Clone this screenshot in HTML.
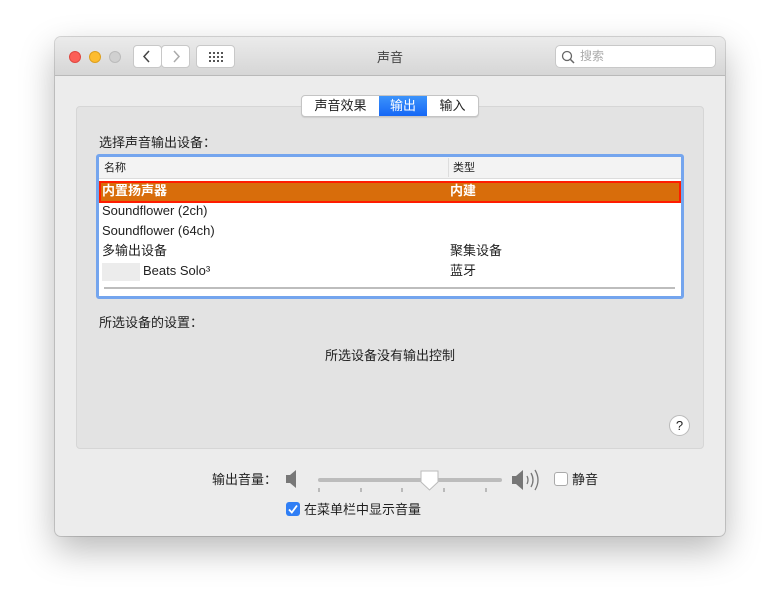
<!DOCTYPE html><html><head><meta charset="utf-8"><style>
*{box-sizing:border-box;margin:0;padding:0}
body{width:780px;height:610px;background:#fff;position:relative;font-family:"Liberation Sans","Noto Sans CJK SC",sans-serif;font-size:13px;color:#222;overflow:hidden}
.a{position:absolute}
.win{left:55px;top:37px;width:670px;height:499px;background:#ececec;border-radius:6px;box-shadow:0 14px 35px rgba(0,0,0,.28),0 0 0 1px rgba(0,0,0,.15);overflow:hidden}
.tb{left:0;top:0;width:670px;height:39px;background:linear-gradient(#ebebeb,#d6d6d6);border-bottom:1px solid #b9b9b9}
.dot{width:12px;height:12px;border-radius:50%;top:14px}
.btn{background:#fff;border:1px solid #c8c8c8;border-radius:4px;height:23px;top:8px}
.row{position:absolute;left:6px;width:577px;height:20px;line-height:20px;font-size:13px}
</style></head><body>
<div class="a win">
<div class="a tb">
<div class="a dot" style="left:14px;background:#fc5f57;border:1px solid #df4740"></div>
<div class="a dot" style="left:34px;background:#fdbc2e;border:1px solid #dd9f1e"></div>
<div class="a dot" style="left:54px;background:#d0d0d0;border:1px solid #bbb"></div>
<div class="a btn" style="left:78px;width:29px"><svg width="27" height="21"><path d="M15 5l-5 5.5 5 5.5" stroke="#444" stroke-width="1.5" fill="none"/></svg></div>
<div class="a btn" style="left:106px;width:29px"><svg width="27" height="21"><path d="M12 5l5 5.5-5 5.5" stroke="#aaa" stroke-width="1.5" fill="none"/></svg></div>
<div class="a btn" style="left:141px;width:39px"><svg width="39" height="21" style="position:absolute;left:-1px;top:0"><g fill="#555"><rect x="13" y="6" width="2" height="2"/><rect x="17" y="6" width="2" height="2"/><rect x="21" y="6" width="2" height="2"/><rect x="25" y="6" width="2" height="2"/><rect x="13" y="10" width="2" height="2"/><rect x="17" y="10" width="2" height="2"/><rect x="21" y="10" width="2" height="2"/><rect x="25" y="10" width="2" height="2"/><rect x="13" y="14" width="2" height="2"/><rect x="17" y="14" width="2" height="2"/><rect x="21" y="14" width="2" height="2"/><rect x="25" y="14" width="2" height="2"/></g></svg></div>
<div class="a" style="left:0;width:670px;top:10px;text-align:center;color:#444">声音</div>
<div class="a btn" style="left:500px;width:161px;border-radius:5px;padding-left:24px;line-height:21px;color:#aaa;font-size:12px">搜索<svg class="a" style="left:5px;top:4px" width="14" height="14"><circle cx="6" cy="6" r="4.5" stroke="#666" stroke-width="1.3" fill="none"/><path d="M9.5 9.5L13 13" stroke="#666" stroke-width="1.5"/></svg></div>
</div>
<div class="a" style="left:21px;top:69px;width:628px;height:343px;background:#e3e3e3;border:1px solid #d6d6d6;border-radius:4px"></div>
<div class="a" style="left:246px;top:58px;width:178px;height:22px;background:#fff;border:1px solid #c4c4c4;border-radius:4px;box-shadow:0 1px 1px rgba(0,0,0,.1)"></div>
<div class="a" style="left:247px;top:59px;width:77px;height:20px;line-height:19px;text-align:center">声音效果</div>
<div class="a" style="left:324px;top:59px;width:48px;height:20px;line-height:19px;text-align:center;color:#fff;background:linear-gradient(#3c93fb,#1567f5)">输出</div>
<div class="a" style="left:372px;top:59px;width:51px;height:20px;line-height:19px;text-align:center">输入</div>
<div class="a" style="left:44px;top:95px;font-size:13px">选择声音输出设备：</div>
<div class="a" style="left:41px;top:117px;width:588px;height:145px;background:#fff;border:3px solid #74a5ee;border-radius:3px">
<div class="a" style="left:0;top:0;width:582px;height:22px;background:#f3f3f3;border-bottom:1px solid #ddd;font-size:11px;line-height:20px"><span class="a" style="left:5px;top:1px">名称</span><span class="a" style="left:349px;border-left:1px solid #ddd;padding-left:4px;height:19px;top:1px;line-height:21px">类型</span></div>
<div class="a" style="left:0;top:24px;width:582px;height:22px;background:#d86d0b;border:2px solid #ff1c00"></div>
<div class="row" style="top:24px;left:3px;color:#fff;font-weight:bold">内置扬声器<span class="a" style="left:348px">内建</span></div>
<div class="row" style="top:44px;left:3px">Soundflower (2ch)</div>
<div class="row" style="top:64px;left:3px">Soundflower (64ch)</div>
<div class="row" style="top:84px;left:3px">多输出设备<span class="a" style="left:348px">聚集设备</span></div>
<div class="row" style="top:104px;left:3px"><span class="a" style="left:0;top:2px;width:38px;height:18px;background:#ececec"></span><span class="a" style="left:41px">Beats Solo³</span><span class="a" style="left:348px">蓝牙</span></div>
<div class="a" style="left:5px;top:130px;width:571px;height:2px;background:#bdbdbd"></div>
</div>
<div class="a" style="left:44px;top:275px">所选设备的设置：</div>
<div class="a" style="left:0;width:670px;top:308px;text-align:center">所选设备没有输出控制</div>
<div class="a" style="left:614px;top:378px;width:21px;height:21px;border-radius:50%;background:#fff;border:1px solid #bbb;text-align:center;line-height:19px;font-size:13px">?</div>
<div class="a" style="left:157px;top:432px">输出音量：</div>
<svg class="a" style="left:230px;top:432px" width="14" height="20"><path d="M1 6h4l6-5v18l-6-5H1z" fill="#777"/></svg>
<div class="a" style="left:263px;top:441px;width:184px;height:4px;border-radius:2px;background:#bcbcbc"></div>
<svg class="a" style="left:364px;top:433px" width="22" height="22"><path d="M2 1h17v11l-8.5 8L2 12z" fill="#fff" stroke="#bbb"/></svg>
<svg class="a" style="left:255px;top:450px" width="200" height="8"><g stroke="#888"><path d="M9 1v4M51 1v4M92 1v4M134 1v4M176 1v4"/></g></svg>
<svg class="a" style="left:456px;top:430px" width="34" height="26"><path d="M1 9h4l7-6v20l-7-6H1z" fill="#777"/><g fill="none" stroke="#777" stroke-width="1.3"><path d="M16 9q2 4 0 8"/><path d="M20 6q4 7 0 14"/><path d="M24 3q6 10 0 20"/></g></svg>
<div class="a" style="left:499px;top:435px;width:14px;height:14px;background:#fff;border:1px solid #aaa;border-radius:3px"></div>
<div class="a" style="left:517px;top:432px">静音</div>
<div class="a" style="left:231px;top:465px;width:14px;height:14px;background:#2f7ef5;border-radius:3px"><svg width="14" height="14"><path d="M3 7.5l2.8 3L11 3.5" stroke="#fff" stroke-width="1.8" fill="none"/></svg></div>
<div class="a" style="left:249px;top:462px">在菜单栏中显示音量</div>
</div>
</body></html>
